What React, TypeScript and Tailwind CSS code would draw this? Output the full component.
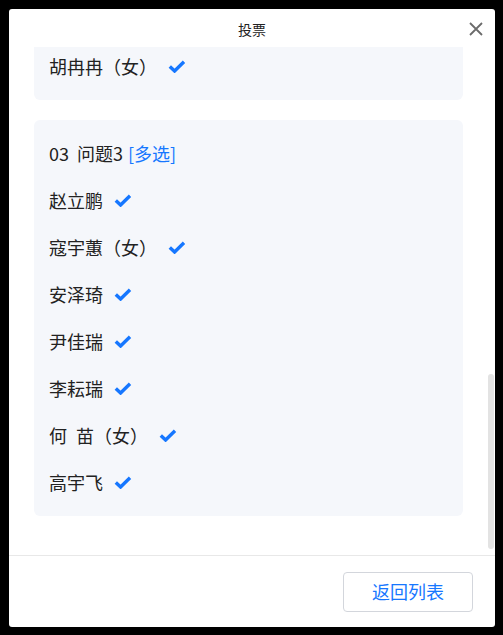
import React from 'react';

const font = { fontFamily: '"Noto Sans CJK SC", "Noto Sans", sans-serif' };

const Check: React.FC = () => (
  <svg width="18" height="13" viewBox="0 0 18 13" className="shrink-0">
    <path d="M1.8 6.4 L6.6 11 L16 1.8" fill="none" stroke="#1677ff" strokeWidth="3.4" strokeLinejoin="miter" />
  </svg>
);

const Option: React.FC<{ children: React.ReactNode }> = ({ children }) => (
  <div className="flex h-[47px] items-center gap-[11px] text-[18px] text-[#222]">
    <span>{children}</span>
    <Check />
  </div>
);

const names = ['赵立鹏', '寇宇蕙（女）', '安泽琦', '尹佳瑞', '李耘瑞'];

export default function App() {
  return (
    <div className="h-[635px] w-[503px] bg-black pl-[9px] pt-[9px]" style={font}>
      <div className="flex h-[618px] w-[486px] flex-col overflow-hidden rounded-[3px] bg-white">
        {/* header */}
        <div className="relative flex h-[38px] shrink-0 items-center justify-center pt-[2px]">
          <span className="text-[14px] text-[#222]">投票</span>
          <button className="absolute right-[11px] top-[12px]">
            <svg width="16" height="16" viewBox="0 0 16 16">
              <path d="M2 2 L14 14 M14 2 L2 14" stroke="#6b6b6b" strokeWidth="1.8" fill="none" />
            </svg>
          </button>
        </div>

        {/* scroll body */}
        <div className="relative flex-1 overflow-hidden pl-[25px] pr-[32px]">
          <div className="-mt-[14px] flex flex-col gap-[20px]">
            <div className="rounded-[6px] bg-[#f5f7fb] px-[15px] py-[10px]">
              <Option>胡冉冉（女）</Option>
            </div>
            <div className="rounded-[6px] bg-[#f5f7fb] px-[15px] py-[10px]">
              <div className="flex h-[47px] items-center text-[18px] text-[#222]">
                <span>03</span>
                <span className="ml-[8px]">问题3</span>
                <span className="ml-[5px] text-[#1677ff]">[多选]</span>
              </div>
              {names.map((n) => (
                <Option key={n}>{n}</Option>
              ))}
              <Option>
                何<span className="ml-[9px]">苗（女）</span>
              </Option>
              <Option>高宇飞</Option>
            </div>
          </div>
          <div className="absolute right-[1px] top-[327px] h-[175px] w-[6px] rounded-full bg-[#e3e3e3]" />
        </div>

        {/* footer */}
        <div className="flex h-[72px] shrink-0 items-center justify-end border-t border-[#e8e8e8] pr-[22px]">
          <button className="h-[40px] w-[130px] rounded-[4px] border border-[#d3d6dc] bg-white text-[18px] text-[#1677ff]">
            返回列表
          </button>
        </div>
      </div>
    </div>
  );
}
